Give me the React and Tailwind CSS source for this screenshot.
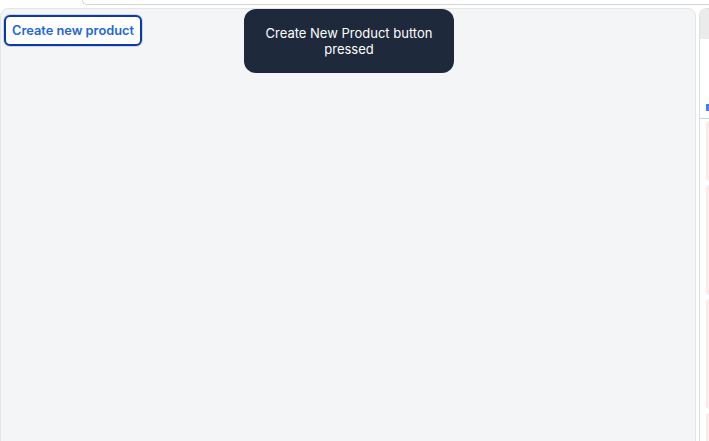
export default function App() {
  return (
    <div className="relative h-[441px] w-[709px] overflow-hidden bg-white" style={{ fontFamily: 'Inter, "Liberation Sans", sans-serif' }}>
      <div className="ml-[82px] h-[5px] rounded-bl-[10px] border-b border-l border-[#d4d4d4] bg-white" />
      <div className="mt-[3px] flex h-[440px] gap-[3px]">
        <div className="w-[696px] shrink-0 rounded-t-[8px] border border-[#e3e5e8] bg-[#f4f5f7] pl-[3px] pt-[6px]">
          <button className="rounded-[6px] border-2 border-[#0b3aa5] bg-white px-[6px] py-[5px] text-[12.8px] leading-[17px] font-semibold text-[#2466de] shadow-[0_0_0_1px_#cfd6e4]">
            Create new product
          </button>
        </div>
        <div className="flex-1 overflow-hidden rounded-tl-[8px] border-l border-t border-[#dedede] bg-white">
          <div className="h-[30px] bg-[#ebebeb]" />
          <div className="h-[80px] border-b border-[#bcd3f5] pl-[6px] pt-[65px]">
            <div className="h-[7px] w-[4px] bg-[#3b82f6]" />
          </div>
          <div className="flex flex-col gap-[4px] pl-[6px] pt-[2px]">
            <div className="h-[60px] rounded-l-[6px] bg-[#fdeaea]" />
            <div className="h-[110px] rounded-l-[6px] bg-[#fdeaea]" />
            <div className="h-[110px] rounded-l-[6px] bg-[#fdeaea]" />
            <div className="h-[60px] rounded-l-[6px] bg-[#fdeaea]" />
          </div>
        </div>
      </div>
      <div className="absolute left-[244px] top-[9px] flex h-[64px] w-[210px] items-center justify-center rounded-[12px] bg-[#1e293b] px-4 text-center text-[13px] leading-[16px] text-white">
        Create New Product button pressed
      </div>
    </div>
  );
}
